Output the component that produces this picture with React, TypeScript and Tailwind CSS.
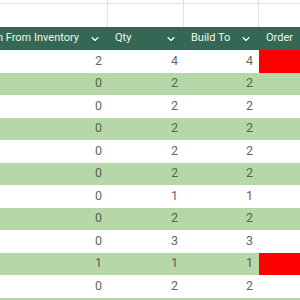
import React from "react";
import { ChevronDown } from "lucide-react";

const rows: [number, number, number, boolean][] = [
  [2, 4, 4, true],
  [0, 2, 2, false],
  [0, 2, 2, false],
  [0, 2, 2, false],
  [0, 2, 2, false],
  [0, 2, 2, false],
  [0, 1, 1, false],
  [0, 2, 2, false],
  [0, 3, 3, false],
  [1, 1, 1, true],
  [0, 2, 2, false],
];

const cols = "grid grid-cols-[136px_76px_75px_100px]";

function HeaderCell({ label, chevron, alignEnd }: { label: string; chevron?: boolean; alignEnd?: boolean }) {
  return (
    <div
      className={`flex items-center overflow-hidden pl-[7px] pr-[7px] ${
        alignEnd ? "justify-end gap-[10px]" : "justify-between"
      }`}
    >
      <span className="whitespace-nowrap">{label}</span>
      {chevron && <ChevronDown size={12} strokeWidth={2.2} className="shrink-0 text-white" />}
    </div>
  );
}

export default function App() {
  return (
    <div
      className="w-[300px] h-[300px] overflow-hidden bg-white"
      style={{ fontFamily: "Roboto, 'Liberation Sans', sans-serif" }}
    >
      <div className="-ml-[28px] w-[387px]">
        {/* blank sheet rows above the table */}
        <div className={`${cols} h-[27px]`}>
          {[0, 1, 2, 3].map((i) => (
            <div key={i} className={i < 3 ? "border-r border-[#e2e2e2]" : ""}>
              <div className="h-[4px] border-b border-[#e2e2e2]" />
            </div>
          ))}
        </div>

        {/* table header */}
        <div className={`${cols} h-[23px] bg-[#356854] text-[11px] text-[#eef5f0]`}>
          <HeaderCell label="Taken From Inventory" chevron alignEnd />
          <HeaderCell label="Qty" chevron />
          <HeaderCell label="Build To" chevron />
          <HeaderCell label="Order" />
        </div>

        {/* data rows */}
        {rows.map(([taken, qty, build, order], i) => (
          <div
            key={i}
            className={`${cols} h-[22.5px] text-[12.5px] ${
              i % 2 === 1 ? "bg-[#b6d7a8] text-[#56634f]" : "bg-white text-[#666666]"
            }`}
          >
            <div className="flex items-center justify-end pr-[6px]">{taken}</div>
            <div className="flex items-center justify-end pr-[6px]">{qty}</div>
            <div className="flex items-center justify-end pr-[6px]">{build}</div>
            <div className={order ? "bg-[#ff0000]" : ""} />
          </div>
        ))}
        <div className={`${cols} h-[22.5px] bg-[#b6d7a8]`} />
      </div>
    </div>
  );
}
